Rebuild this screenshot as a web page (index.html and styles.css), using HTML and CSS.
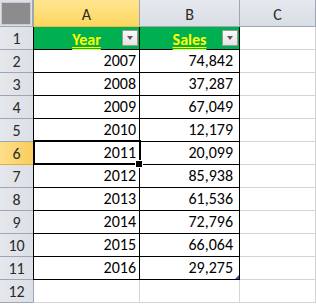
FILE: index.html
```
<!DOCTYPE html>
<html lang="en">
<head>
    <meta charset="UTF-8">
    <title>Sheet1</title>
    <link rel="stylesheet" href="styles.css">
</head>
<body>
<div class="sheet">
    <div class="corner"><span></span></div>
    <div class="ch ch-a active">A</div>
    <div class="ch">B</div>
    <div class="ch">C</div>

    <div class="rh">1</div>
    <div class="c t ta head"><span class="title">Year</span><span class="filter"></span></div>
    <div class="c t head"><span class="title">Sales</span><span class="filter"></span></div>
    <div class="c"></div>

    <div class="rh">2</div>
    <div class="c t ta num">2007</div>
    <div class="c t num">74,842</div>
    <div class="c"></div>

    <div class="rh">3</div>
    <div class="c t ta num">2008</div>
    <div class="c t num">37,287</div>
    <div class="c"></div>

    <div class="rh">4</div>
    <div class="c t ta num">2009</div>
    <div class="c t num">67,049</div>
    <div class="c"></div>

    <div class="rh">5</div>
    <div class="c t ta num">2010</div>
    <div class="c t num">12,179</div>
    <div class="c"></div>

    <div class="rh active">6</div>
    <div class="c t ta num sel">2011</div>
    <div class="c t num">20,099</div>
    <div class="c"></div>

    <div class="rh">7</div>
    <div class="c t ta num">2012</div>
    <div class="c t num">85,938</div>
    <div class="c"></div>

    <div class="rh">8</div>
    <div class="c t ta num">2013</div>
    <div class="c t num">61,536</div>
    <div class="c"></div>

    <div class="rh">9</div>
    <div class="c t ta num">2014</div>
    <div class="c t num">72,796</div>
    <div class="c"></div>

    <div class="rh">10</div>
    <div class="c t ta num">2015</div>
    <div class="c t num">66,064</div>
    <div class="c"></div>

    <div class="rh">11</div>
    <div class="c t ta num">2016</div>
    <div class="c t num last">29,275</div>
    <div class="c"></div>

    <div class="rh">12</div>
    <div class="c ta-plain"></div>
    <div class="c"></div>
    <div class="c"></div>
</div>
</body>
</html>
```
FILE: styles.css
```
* {
    box-sizing: border-box;
    margin: 0;
    padding: 0;
}
body {
    font-family: "Carlito", "Lato", "Liberation Sans", sans-serif;
    font-size: 16px;
    color: #000;
    background-color: #fff;
    overflow: hidden;
}
.sheet {
    display: grid;
    grid-template-columns: 33px 107px 100px 76px;
    grid-template-rows: 27px repeat(12, 23px);
    width: 316px;
}
.corner {
    background-color: #dde1e7;
    border-right: 1px solid #9ea6b3;
    border-bottom: 1px solid #9ea6b3;
    padding: 2px 1px 1px 1px;
}
.corner span {
    display: block;
    height: 100%;
    background-color: #8c8c8c;
    border: 1px solid #c8ccd2;
}
.ch {
    display: flex;
    align-items: center;
    justify-content: center;
    background: linear-gradient(#e6e9ee, #d9dde4);
    border-right: 1px solid #9ea6b3;
    border-bottom: 1px solid #9ea6b3;
    color: #2a2a2a;
    font-size: 16px;
    padding-top: 2px;
}
.ch-a {
    border-left: 1px solid #9ea6b3;
}
.ch.active {
    background: linear-gradient(#fee590, #fdd65e);
    border-bottom-color: #f1b84a;
}
.rh {
    display: flex;
    align-items: center;
    justify-content: center;
    background: linear-gradient(90deg, #e4e7ec, #dcdfe5);
    border-bottom: 1px solid #9ea6b3;
    color: #2a2a2a;
    font-size: 16px;
    padding-top: 1px;
}
.rh.active {
    background: linear-gradient(90deg, #fde08a, #f9cc5c);
    border-bottom-color: #e5ac3e;
}
.c {
    border-right: 1px solid #d4d4d4;
    border-bottom: 1px solid #d4d4d4;
}
.t {
    border-right-color: #000;
    border-bottom-color: #000;
}
.ta {
    border-left: 1px solid #000;
}
.ta-plain {
    border-left: 1px solid #9ea6b3;
}
.num {
    display: flex;
    align-items: flex-end;
    justify-content: flex-end;
    padding: 0 3px 2px 0;
    line-height: 19px;
}
.num:not(.ta) {
    padding-right: 6px;
}
.head {
    display: flex;
    align-items: center;
    justify-content: center;
    position: relative;
    background-color: #00b050;
}
.title {
    color: #ffff00;
    font-weight: bold;
    font-size: 16px;
    text-decoration: underline double;
    text-underline-offset: 2px;
    margin-top: 2px;
}
.filter {
    position: absolute;
    right: 1px;
    top: 3px;
    width: 16px;
    height: 16px;
    background: linear-gradient(#fafafa, #e4e4e4);
    border: 1px solid #9a9a9a;
}
.filter::after {
    content: '';
    position: absolute;
    left: 4px;
    top: 5px;
    border-left: 3px solid transparent;
    border-right: 3px solid transparent;
    border-top: 4px solid #5a5a5a;
}
.sel {
    position: relative;
}
.sel::after {
    content: '';
    position: absolute;
    left: -1px;
    top: -2px;
    right: -2px;
    bottom: -1px;
    border: 2px solid #000;
}
.sel::before {
    content: '';
    position: absolute;
    right: -4px;
    bottom: -4px;
    width: 6px;
    height: 6px;
    background-color: #000;
    border: 1px solid #fff;
    z-index: 1;
}
.last {
    position: relative;
}
.last::after {
    content: '';
    position: absolute;
    right: 0;
    bottom: 0;
    border-left: 4px solid transparent;
    border-bottom: 4px solid #3a53a4;
}
```
